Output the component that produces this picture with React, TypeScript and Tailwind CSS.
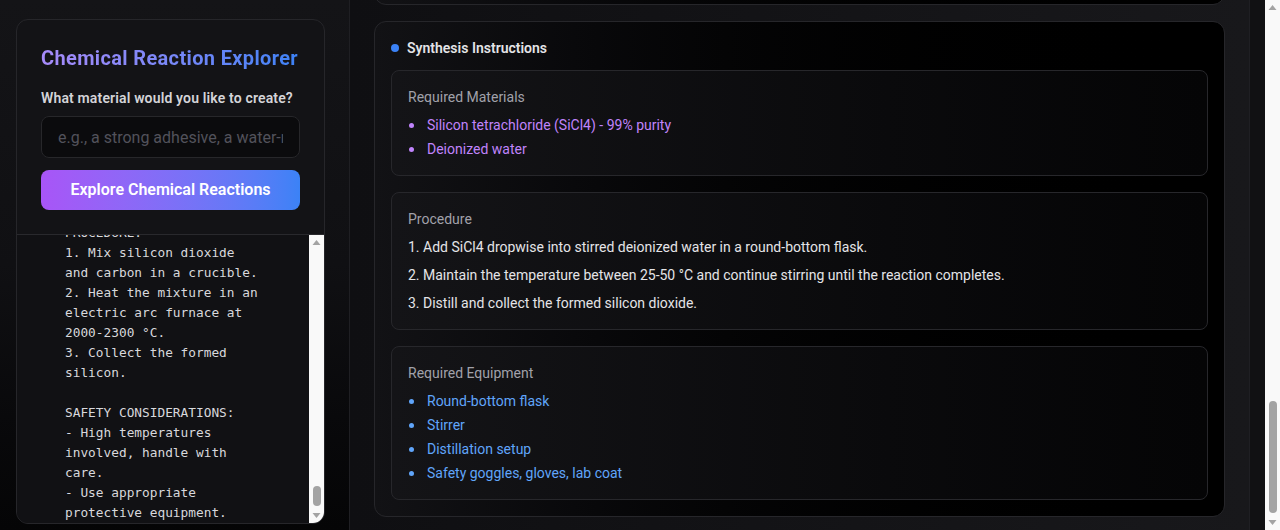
import { useLayoutEffect, useRef } from 'react';

const procedureLog = `TARGET MATERIAL:
High-purity silicon

REACTION:
SiO2 + 2C → Si + 2CO

REQUIRED MATERIALS:
- Silicon dioxide (SiO2)
- Carbon (coke or
charcoal)

PROCEDURE:
1. Mix silicon dioxide
and carbon in a crucible.
2. Heat the mixture in an
electric arc furnace at
2000-2300 °C.
3. Collect the formed
silicon.

SAFETY CONSIDERATIONS:
- High temperatures
involved, handle with
care.
- Use appropriate
protective equipment.`;

const materials = ['Silicon tetrachloride (SiCl4) - 99% purity', 'Deionized water'];

const steps = [
  '1. Add SiCl4 dropwise into stirred deionized water in a round-bottom flask.',
  '2. Maintain the temperature between 25-50 °C and continue stirring until the reaction completes.',
  '3. Distill and collect the formed silicon dioxide.',
];

const equipment = ['Round-bottom flask', 'Stirrer', 'Distillation setup', 'Safety goggles, gloves, lab coat'];

const earlier = [
  { title: 'Reaction Overview', h: 'h-[560px]' },
  { title: 'Reaction Pathways', h: 'h-[580px]' },
  { title: 'Reaction Conditions', h: 'h-[575px]' },
];

// classic light scrollbar, scrolled to the end
function Scrollbar({ thumb }: { thumb: string }) {
  return (
    <div className="w-[15px] shrink-0 bg-[#f9f9f9] flex flex-col items-center">
      <svg width="15" height="15" viewBox="0 0 15 15" className="shrink-0">
        <path d="M3.5 10 L7.5 5 L11.5 10 Z" fill="#a3a3a3" />
      </svg>
      <div className="flex-1 w-full flex flex-col justify-end items-center pb-[2px]">
        <div className={`${thumb} w-[8px] rounded-full bg-[#a3a3a3]`} />
      </div>
      <svg width="15" height="15" viewBox="0 0 15 15" className="shrink-0">
        <path d="M3.5 5 L7.5 10 L11.5 5 Z" fill="#a3a3a3" />
      </svg>
    </div>
  );
}

export default function App() {
  const mainRef = useRef<HTMLDivElement>(null);
  const logRef = useRef<HTMLDivElement>(null);

  useLayoutEffect(() => {
    if (mainRef.current) mainRef.current.scrollTop = mainRef.current.scrollHeight;
    if (logRef.current) logRef.current.scrollTop = logRef.current.scrollHeight;
  }, []);

  return (
    <div className="flex h-screen bg-[#111113] text-[#e4e4e7] font-['Roboto',sans-serif] overflow-hidden">
      {/* Sidebar */}
      <aside className="w-[350px] shrink-0 border-r border-[#1f1f23] bg-gradient-to-b from-[#141417] via-[#101013] to-[#050506] pl-4 pt-[19px] pb-[6px] flex flex-col">
        <div className="w-[309px] flex-1 min-h-0 flex flex-col rounded-xl border border-[#26262a] bg-[#131316] overflow-hidden">
          <div className="px-6 pt-6 pb-6">
            <h1 className="text-xl leading-7 font-bold tracking-[0.35px] bg-gradient-to-r from-[#a78bfa] to-[#3b82f6] bg-clip-text text-transparent mb-4 whitespace-nowrap">
              Chemical Reaction Explorer
            </h1>
            <label className="block text-sm leading-5 font-semibold tracking-[0.15px] text-[#d4d4d8] mb-2 whitespace-nowrap">What material would you like to create?</label>
            <input
              className="w-full h-[42px] rounded-lg border border-[#27272a] bg-[#0b0b0d] px-4 text-base text-white placeholder:text-[#52525b] outline-none"
              placeholder="e.g., a strong adhesive, a water-resistant coating"
            />
            <button className="mt-3 w-full h-[40px] rounded-lg bg-gradient-to-r from-[#a855f7] to-[#3b82f6] text-white text-base font-semibold">
              Explore Chemical Reactions
            </button>
          </div>
          <div className="flex-1 min-h-0 flex border-t border-[#29292d] bg-[#111114]">
            <div ref={logRef} className="flex-1 min-w-0 overflow-hidden">
              <pre className="pl-12 pr-4 font-['DejaVu_Sans_Mono',monospace] text-[12.8px] leading-5 text-[#d8d8dc] whitespace-pre">
                {procedureLog}
              </pre>
            </div>
            <Scrollbar thumb="h-[20px]" />
          </div>
        </div>
      </aside>

      {/* Results */}
      <div className="flex-1 flex min-w-0">
        <main ref={mainRef} className="flex-1 min-w-0 h-screen overflow-hidden">
          <div className="w-[900px] min-h-full border-r border-[#1f1f23] bg-gradient-to-r from-[#0f0f12] to-[#18181b] px-6 pt-6 pb-[13px] space-y-4">
            {earlier.map((c) => (
              <section key={c.title} className={`${c.h} rounded-xl border border-[#26262a] bg-gradient-to-r from-[#121215] to-black p-4`}>
                <div className="flex items-center gap-2">
                  <span className="w-2 h-2 rounded-full bg-[#a855f7]" />
                  <h2 className="text-sm font-semibold text-[#e4e4e7]">{c.title}</h2>
                </div>
              </section>
            ))}

            <section className="rounded-xl border border-[#26262a] bg-gradient-to-r from-[#121215] to-black p-4">
              <div className="flex items-center gap-2 mb-3">
                <span className="w-2 h-2 rounded-full bg-[#3b82f6]" />
                <h2 className="text-sm leading-5 font-semibold text-[#e4e4e7]">Synthesis Instructions</h2>
              </div>

              <div className="space-y-4">
                <div className="rounded-lg border border-[#27272b] bg-gradient-to-r from-[#141417] to-[#050506] p-4">
                  <h3 className="text-sm leading-5 text-[#a1a1aa] mb-2">Required Materials</h3>
                  <ul className="space-y-1">
                    {materials.map((m) => (
                      <li key={m} className="flex items-center text-sm leading-5 text-[#c084fc]">
                        <span className="w-[5px] h-[5px] rounded-full bg-[#c084fc] ml-[1px] mr-[13px]" />
                        {m}
                      </li>
                    ))}
                  </ul>
                </div>

                <div className="rounded-lg border border-[#27272b] bg-gradient-to-r from-[#141417] to-[#050506] p-4">
                  <h3 className="text-sm leading-5 text-[#a1a1aa] mb-2">Procedure</h3>
                  <div className="space-y-2">
                    {steps.map((s) => (
                      <p key={s} className="text-sm leading-5 text-[#e4e4e7]">{s}</p>
                    ))}
                  </div>
                </div>

                <div className="rounded-lg border border-[#27272b] bg-gradient-to-r from-[#141417] to-[#050506] p-4">
                  <h3 className="text-sm leading-5 text-[#a1a1aa] mb-2">Required Equipment</h3>
                  <ul className="space-y-1">
                    {equipment.map((e) => (
                      <li key={e} className="flex items-center text-sm leading-5 text-[#60a5fa]">
                        <span className="w-[5px] h-[5px] rounded-full bg-[#60a5fa] ml-[1px] mr-[13px]" />
                        {e}
                      </li>
                    ))}
                  </ul>
                </div>
              </div>
            </section>
          </div>
        </main>
        <Scrollbar thumb="h-[112px]" />
      </div>
    </div>
  );
}
